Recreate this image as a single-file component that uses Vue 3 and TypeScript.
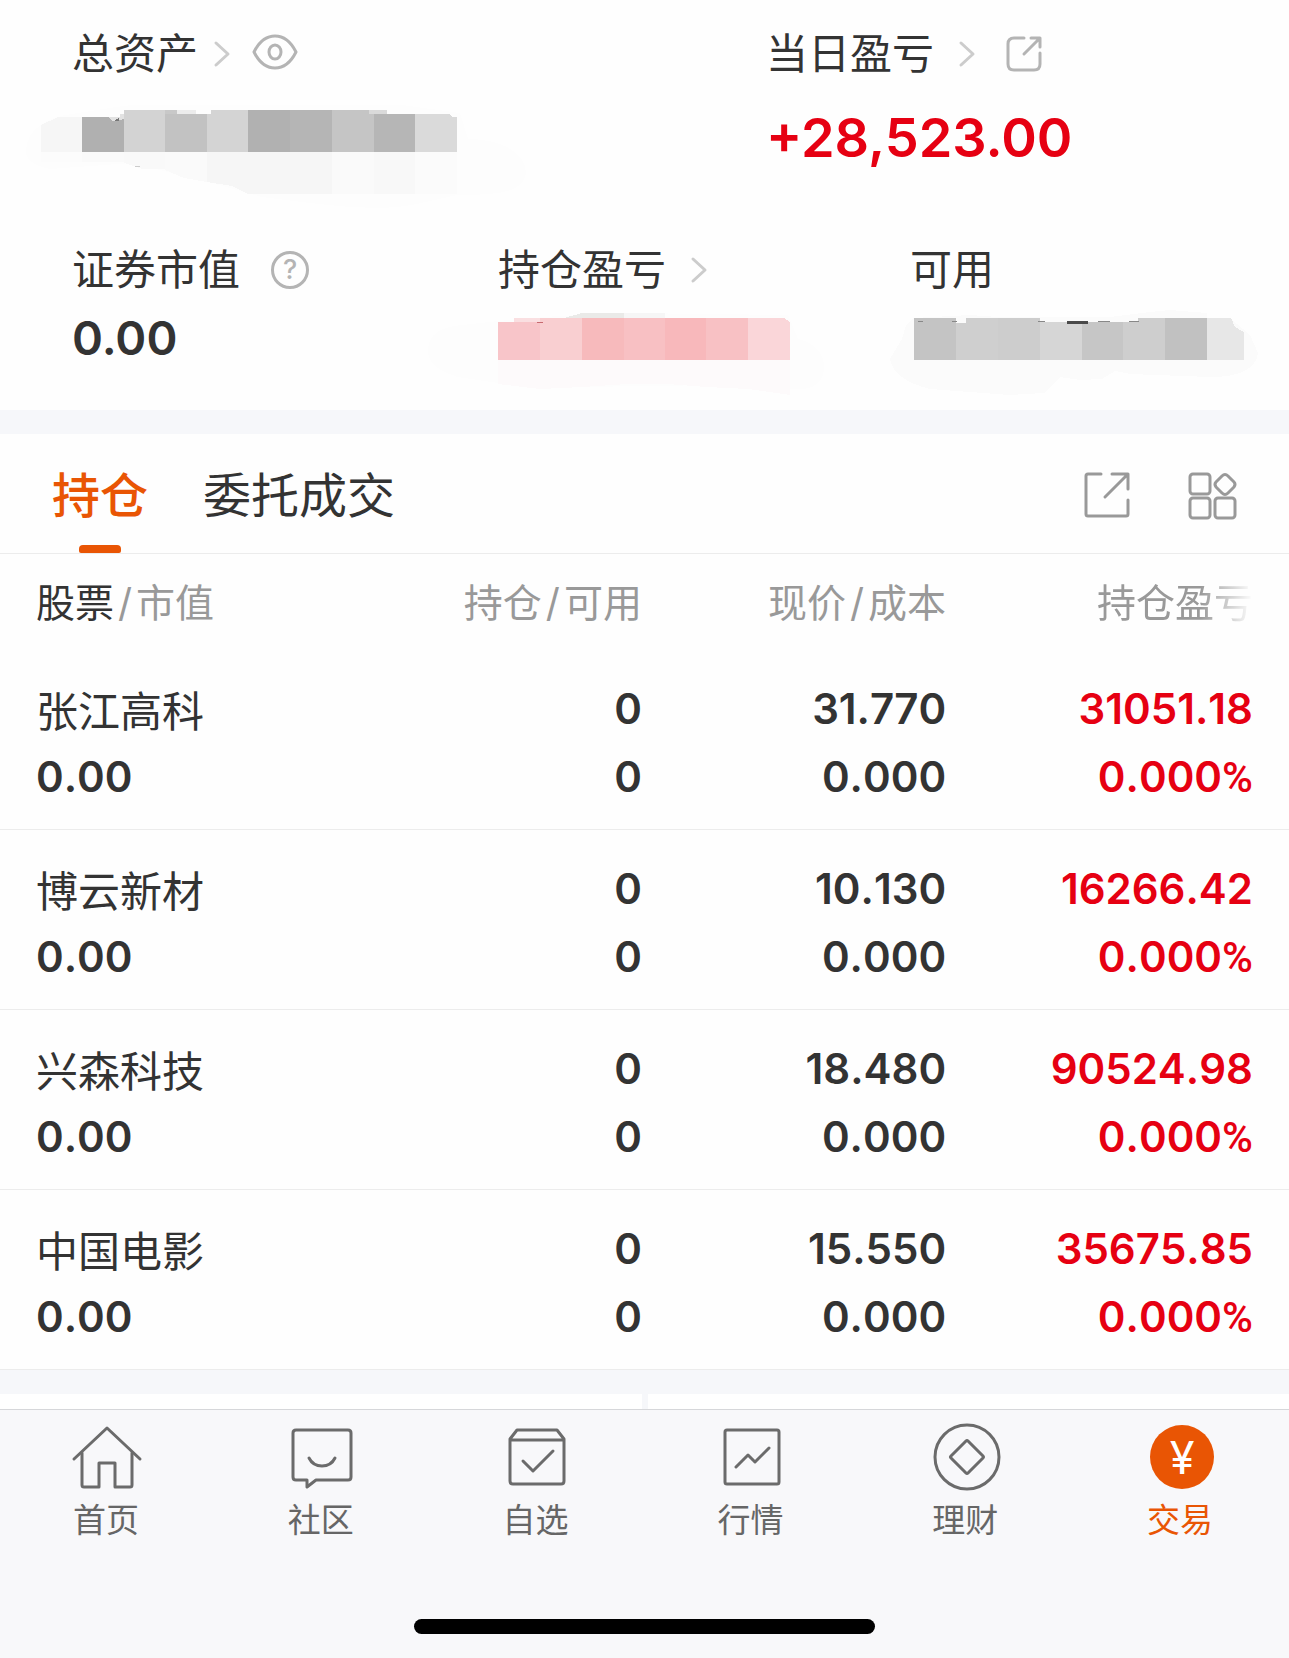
<script setup lang="ts">
interface Holding {
  name: string
  marketValue: string
  position: string
  available: string
  price: string
  cost: string
  profit: string
  profitRate: string
}

interface Cell {
  x: number
  y: number
  w: number
  h: number
  fill: string
}

const holdings: Holding[] = [
  { name: '张江高科', marketValue: '0.00', position: '0', available: '0', price: '31.770', cost: '0.000', profit: '31051.18', profitRate: '0.000' },
  { name: '博云新材', marketValue: '0.00', position: '0', available: '0', price: '10.130', cost: '0.000', profit: '16266.42', profitRate: '0.000' },
  { name: '兴森科技', marketValue: '0.00', position: '0', available: '0', price: '18.480', cost: '0.000', profit: '90524.98', profitRate: '0.000' },
  { name: '中国电影', marketValue: '0.00', position: '0', available: '0', price: '15.550', cost: '0.000', profit: '35675.85', profitRate: '0.000' },
]

const navItems = [
  { key: 'home', label: '首页' },
  { key: 'community', label: '社区' },
  { key: 'watchlist', label: '自选' },
  { key: 'market', label: '行情' },
  { key: 'wealth', label: '理财' },
  { key: 'trade', label: '交易' },
]

const totalCells: Cell[] = [
  { x: 10, y: 12, w: 42, h: 35, fill: '#b0b0b0' },
  { x: 52, y: 5, w: 41, h: 42, fill: '#d3d3d3' },
  { x: 93, y: 9, w: 42, h: 38, fill: '#c2c2c2' },
  { x: 93, y: 5, w: 12, h: 4, fill: '#c8c8c8' },
  { x: 105, y: 5, w: 19, h: 4, fill: '#ececec' },
  { x: 135, y: 9, w: 41, h: 38, fill: '#d4d4d4' },
  { x: 139, y: 5, w: 37, h: 4, fill: '#d4d4d4' },
  { x: 176, y: 5, w: 42, h: 42, fill: '#b1b1b1' },
  { x: 218, y: 5, w: 42, h: 42, fill: '#b5b5b5' },
  { x: 260, y: 5, w: 42, h: 42, fill: '#c5c5c5' },
  { x: 297, y: 5, w: 18, h: 4, fill: '#dadada' },
  { x: 302, y: 9, w: 41, h: 38, fill: '#b6b6b6' },
]

const profitCells: Cell[] = [
  { x: 0, y: 13, w: 42, h: 38, fill: '#f8c5c9' },
  { x: 16, y: 9, w: 26, h: 4, fill: '#fadfe1' },
  { x: 42, y: 9, w: 42, h: 42, fill: '#f9cfd1' },
  { x: 84, y: 9, w: 42, h: 42, fill: '#f7babc' },
  { x: 126, y: 9, w: 41, h: 42, fill: '#f8c0c3' },
  { x: 167, y: 9, w: 41, h: 42, fill: '#f8b8bb' },
  { x: 208, y: 9, w: 42, h: 42, fill: '#f8c1c4' },
]

const availableCells: Cell[] = [
  { x: 4, y: 9, w: 42, h: 42, fill: '#c4c4c4' },
  { x: 46, y: 14, w: 42, h: 37, fill: '#cfcfcf' },
  { x: 56, y: 9, w: 32, h: 5, fill: '#cfcfcf' },
  { x: 88, y: 9, w: 42, h: 42, fill: '#cdcdcd' },
  { x: 130, y: 13, w: 42, h: 38, fill: '#d6d6d6' },
  { x: 172, y: 13, w: 41, h: 38, fill: '#c6c6c6' },
  { x: 213, y: 13, w: 42, h: 38, fill: '#cecece' },
  { x: 228, y: 9, w: 27, h: 4, fill: '#cecece' },
  { x: 255, y: 9, w: 42, h: 42, fill: '#c1c1c1' },
]
</script>

<template>
  <main class="page">
    <section class="summary" aria-label="资产概览">
      <div class="row row-top">
        <div class="metric">
          <div class="label">
            <span>总资产</span>
            <svg class="chevron near" viewBox="0 0 16 26" aria-hidden="true"><path d="M2 2L14 13L2 24" /></svg>
            <button class="icon-btn after-near" type="button" aria-label="隐藏资产">
              <svg class="eye" viewBox="0 2 46 32" aria-hidden="true">
                <path d="M2 16C7 6 14 0 23 0S39 6 44 16C39 26 32 32 23 32S7 26 2 16Z" />
                <ellipse cx="23" cy="16" rx="6" ry="7" />
              </svg>
            </button>
          </div>
          <svg class="mask mask-total" viewBox="0 0 386 64" aria-hidden="true">
            <path d="M-46 46C-46 24 -24 12 0 9L44 2L60 0H330L388 8L396 34C430 34 454 48 454 68C452 88 425 90 385 90L340 100C300 108 240 98 190 92L140 78L60 58L-22 64C-40 60 -46 54 -46 46Z" fill="#fdfdfd" />
            <path d="M-31 20L-14 12H10V47H-31Z" fill="#f6f6f6" />
            <path d="M-31 47H10V57H-31Z" fill="#fcfcfc" />
            <path d="M10 47H52V57H10Z" fill="#fafafa" />
            <path d="M52 47H93V64H70L52 58Z" fill="#f9f9f9" />
            <path d="M93 47H135V77L112 73L93 65Z" fill="#fafafa" />
            <path d="M135 47H260V89H176L160 81L135 77Z" fill="#f6f6f6" />
            <path d="M260 47H302V89H260Z" fill="#fafafa" />
            <path d="M302 47H343V89H302Z" fill="#f8f8f8" />
            <path d="M343 47H385V89H343Z" fill="#fbfbfb" />
            <rect v-for="(c, i) in totalCells" :key="i" :x="c.x" :y="c.y" :width="c.w" :height="c.h" :fill="c.fill" />
            <path d="M36 12H48V9H52V14L44 16H40Z" fill="#e2e2e2" />
            <path d="M42 16L47 13V16Z" fill="#777" />
            <path d="M63 61H68" stroke="#ccc" />
            <path d="M343 9H377L381 12H385V47H343Z" fill="#dadada" />
          </svg>
        </div>
        <div class="metric">
          <div class="label">
            <span>当日盈亏</span>
            <svg class="chevron" viewBox="0 0 16 26" aria-hidden="true"><path d="M2 2L14 13L2 24" /></svg>
            <button class="icon-btn" type="button" aria-label="分享当日盈亏">
              <svg class="share-small" viewBox="0 0 36 36" aria-hidden="true">
                <path d="M18 2H8Q2 2 2 8V28Q2 34 8 34H28Q34 34 34 28V17" />
                <path d="M25 2H34V11M18 18L33 3" />
              </svg>
            </button>
          </div>
          <div class="value value-big rise">+28,523.00</div>
        </div>
      </div>

      <div class="row row-bottom">
        <div class="metric">
          <div class="label">
            <span>证券市值</span>
            <button class="icon-btn help" type="button" aria-label="证券市值说明">?</button>
          </div>
          <div class="value">0.00</div>
        </div>
        <div class="metric">
          <div class="label">
            <span>持仓盈亏</span>
            <svg class="chevron" viewBox="0 0 16 26" aria-hidden="true"><path d="M2 2L14 13L2 24" /></svg>
          </div>
          <svg class="mask mask-profit" viewBox="0 0 292 56" aria-hidden="true">
            <path d="M-70 42C-70 24 -56 18 -36 16L0 12L60 7L130 4L290 6L300 30C318 34 326 46 326 58C326 76 312 82 292 80L220 76L80 78L0 74L-40 68C-60 62 -70 54 -70 42Z" fill="#fdfdfd" />
            <path d="M66 9L84 4H126V9Z" fill="#eaeae8" />
            <path d="M126 4H167V9H126Z" fill="#f6f6f6" />
            <path d="M0 51H292V86L250 80L208 78L170 75H130L84 78L42 80L0 75Z" fill="#fdfafb" />
            <rect v-for="(c, i) in profitCells" :key="i" :x="c.x" :y="c.y" :width="c.w" :height="c.h" :fill="c.fill" />
            <path d="M250 9H286L292 13V51H250Z" fill="#fad6d9" />
            <path d="M39 13H45" stroke="#c86a70" />
          </svg>
        </div>
        <div class="metric">
          <div class="label"><span>可用</span></div>
          <svg class="mask mask-available" viewBox="0 0 334 56" aria-hidden="true">
            <path d="M-20 50L-8 30L-4 16L4 9L60 6L88 8H200L240 3L260 1L297 4V9H320L340 26L348 44C346 60 330 68 300 68L220 65L205 62L192 70L170 71L150 68L134 84L100 86L20 80C-4 74 -18 64 -20 50Z" fill="#fbfbfb" />
            <rect v-for="(c, i) in availableCells" :key="i" :x="c.x" :y="c.y" :width="c.w" :height="c.h" :fill="c.fill" />
            <path d="M297 9H321L325 18L334 23V51H297Z" fill="#e7e7e7" />
            <path d="M157 12H178V15H157Z" fill="#4a4a4a" />
            <path d="M188 12H200M219 12H229M128 12H135M8 12H13M42 12H47" stroke="#888" />
          </svg>
        </div>
      </div>
    </section>

    <section class="holdings" aria-label="持仓列表">
      <div class="tabbar">
        <div class="tabs" role="tablist">
          <button class="tab active" type="button" role="tab" aria-selected="true">持仓</button>
          <button class="tab" type="button" role="tab" aria-selected="false">委托成交</button>
        </div>
        <div class="tools">
          <button class="icon-btn tool" type="button" aria-label="分享持仓">
            <svg viewBox="0 0 50 50" aria-hidden="true">
              <path d="M18 5H5Q3 5 3 7V45Q3 47 5 47H43Q45 47 45 45V31" />
              <path d="M29 5H45V20M22 28L44 6" />
            </svg>
          </button>
          <button class="icon-btn tool" type="button" aria-label="更多功能">
            <svg viewBox="0 0 50 50" aria-hidden="true">
              <rect x="2" y="5" width="20" height="20" rx="3" />
              <rect x="2" y="29" width="20" height="20" rx="3" />
              <rect x="27" y="29" width="20" height="20" rx="3" />
              <path d="M34 7Q37 4 40 7L46 13Q48 15 46 18L40 24Q37 27 34 24L28 18Q26 15 28 13Z" />
            </svg>
          </button>
        </div>
      </div>

      <table class="grid">
        <colgroup>
          <col class="c-name" /><col class="c-num" /><col class="c-num" /><col class="c-last" />
        </colgroup>
        <thead>
          <tr>
            <th scope="col"><b>股票</b><i>/</i>市值</th>
            <th scope="col">持仓<i>/</i>可用</th>
            <th scope="col">现价<i>/</i>成本</th>
            <th scope="col"><span class="fade">持仓盈亏</span></th>
          </tr>
        </thead>
        <tbody>
          <tr v-for="h in holdings" :key="h.name">
            <td><div class="name">{{ h.name }}</div><div>{{ h.marketValue }}</div></td>
            <td><div>{{ h.position }}</div><div>{{ h.available }}</div></td>
            <td><div>{{ h.price }}</div><div>{{ h.cost }}</div></td>
            <td class="rise"><div>{{ h.profit }}</div><div>{{ h.profitRate }}<span class="percent">%</span></div></td>
          </tr>
        </tbody>
      </table>
    </section>

    <div class="split"><div></div><div></div></div>

    <footer class="bottom">
      <nav class="nav" aria-label="主导航">
        <a v-for="item in navItems" :key="item.key" :href="'#' + item.key" class="nav-item" :class="{ current: item.key === 'trade' }">
          <svg viewBox="0 0 66 66" aria-hidden="true">
            <template v-if="item.key === 'home'">
              <path d="M0 35L33 4L66 35" />
              <path d="M8 29V61Q8 63 10 63H25V39H41V63H56Q58 63 58 61V29" />
            </template>
            <template v-else-if="item.key === 'community'">
              <path d="M7 6H59Q62 6 62 9V53Q62 56 59 56H27L18 63V56H7Q4 56 4 53V9Q4 6 7 6Z" />
              <path d="M20 34Q24 42 33 42T46 34" />
            </template>
            <template v-else-if="item.key === 'watchlist'">
              <path d="M6 15L13 6H53L60 15V57Q60 60 57 60H9Q6 60 6 57ZM6 16H60" />
              <path d="M19 37L29 47L49 27" />
            </template>
            <template v-else-if="item.key === 'market'">
              <rect x="6" y="6" width="54" height="54" rx="2" />
              <path d="M17 43L29 31L36 38L50 24" />
            </template>
            <template v-else-if="item.key === 'wealth'">
              <circle cx="33" cy="33" r="32" />
              <path d="M32 17Q33 16 34 17L49 32Q50 33 49 34L34 49Q33 50 32 49L17 34Q16 33 17 32Z" />
            </template>
            <template v-else>
              <circle class="coin" cx="33" cy="33" r="32" />
              <text x="33" y="50" text-anchor="middle">¥</text>
            </template>
          </svg>
          <span>{{ item.label }}</span>
        </a>
      </nav>
      <div class="home-indicator"></div>
    </footer>
  </main>
</template>

<style>
body {
  margin: 0;
  background: #f8f8fa;
}
</style>

<style scoped>
.page {
  background: #fefefe;
  color: #333;
  font-family: Inter, "Noto Sans CJK SC", sans-serif;
  font-size: 42px;
}

button {
  padding: 0;
  border: 0;
  background: none;
  color: inherit;
  font: inherit;
}

svg {
  display: block;
  overflow: visible;
  fill: none;
  stroke-linecap: round;
  stroke-linejoin: round;
}

.rise {
  color: #e60012;
}

.summary {
  padding: 26px 0 44px 72px;
  border-bottom: 24px solid #f6f7fa;
}

.row {
  display: grid;
}

.row-top {
  grid-template-columns: 694fr 523fr;
}

.row-bottom {
  grid-template-columns: 426fr 412fr 379fr;
  margin-top: 72px;
}

.label {
  display: flex;
  align-items: center;
  height: 56px;
  line-height: 56px;
  white-space: nowrap;
}

.chevron {
  width: 16px;
  height: 26px;
  margin-left: 25px;
  stroke: #ccc;
  stroke-width: 3;
}

.chevron.near {
  margin-left: 16px;
}

.icon-btn {
  margin-left: 31px;
  stroke: #b4b4b4;
  stroke-width: 3;
}

.icon-btn.after-near {
  margin-left: 22px;
}

.eye {
  width: 46px;
  height: 32px;
}

.share-small {
  width: 36px;
  height: 36px;
}

.help {
  box-sizing: border-box;
  width: 38px;
  height: 38px;
  border: 3px solid #b4b4b4;
  border-radius: 50%;
  color: #b4b4b4;
  font-size: 27px;
  font-weight: 500;
  line-height: 32px;
}

.value {
  margin-top: 12px;
  font-size: 47px;
  font-weight: 580;
  line-height: 56px;
}

.value-big {
  margin-top: 24px;
  font-size: 54px;
  line-height: 64px;
}

.mask {
  stroke-linecap: butt;
  shape-rendering: crispEdges;
}

.mask-total {
  width: 386px;
  height: 64px;
  margin-top: 23px;
}

.mask-profit {
  width: 292px;
  height: 56px;
  margin-top: 11px;
}

.mask-available {
  width: 334px;
  height: 56px;
  margin-top: 11px;
}

.tabbar {
  display: flex;
  align-items: center;
  justify-content: space-between;
  height: 119px;
  padding: 0 51px 0 52px;
  border-bottom: 1px solid #ececec;
}

.tabs {
  display: flex;
  align-self: stretch;
  gap: 55px;
}

.tab {
  position: relative;
  padding-bottom: 4px;
  font-size: 48px;
}

.tab.active {
  color: #e95504;
  font-weight: 500;
}

.tab.active::after {
  position: absolute;
  bottom: 0;
  left: 50%;
  width: 42px;
  height: 8px;
  margin-left: -21px;
  border-radius: 4px 4px 2px 2px;
  background: #e95504;
  content: "";
}

.tools {
  display: flex;
  gap: 55px;
}

.tool {
  margin-left: 0;
  stroke: #999;
}

.tool svg {
  width: 50px;
  height: 50px;
}

.grid {
  width: 100%;
  border-collapse: separate;
  border-spacing: 0;
  table-layout: fixed;
}

.c-name {
  width: 26.2%;
}

.c-num {
  width: 23.6%;
}

th,
td {
  padding: 0;
  text-align: right;
  white-space: nowrap;
}

th:first-child,
td:first-child {
  padding-left: 36px;
  text-align: left;
}

th:last-child,
td:last-child {
  padding-right: 36px;
}

th {
  height: 92px;
  padding-bottom: 4px;
  color: #999;
  font-size: 39px;
  font-weight: 400;
}

th b {
  color: #333;
  font-weight: 400;
}

th i {
  margin: 0 4px;
  font-style: normal;
}

.fade {
  -webkit-mask-image: linear-gradient(90deg, #000 66%, transparent);
  mask-image: linear-gradient(90deg, #000 66%, transparent);
}

td {
  padding-top: 25px;
  padding-bottom: 18px;
  border-bottom: 1px solid #ececec;
  font-size: 42px;
  font-kerning: none;
  font-weight: 580;
  line-height: 68px;
}

.name {
  padding-top: 5px;
  font-weight: 400;
  line-height: 63px;
}

.percent {
  font-family: Roboto, sans-serif;
  font-weight: 500;
  line-height: 1;
}

.split {
  display: flex;
  gap: 6px;
  height: 15px;
  padding-top: 24px;
  background: #f6f7fa;
}

.split div {
  flex: 1;
  background: #fff;
}

.bottom {
  padding-bottom: 24px;
  border-top: 1px solid #d6d7da;
  background: #f8f8fa;
}

.nav {
  display: grid;
  grid-template-columns: repeat(6, 1fr);
  padding-top: 14px;
}

.nav-item {
  display: flex;
  flex-direction: column;
  align-items: center;
  gap: 10px;
  color: #666;
  font-size: 33px;
  line-height: 40px;
  text-decoration: none;
}

.nav-item span {
  margin-right: 3px;
}

.nav-item svg {
  width: 66px;
  height: 66px;
  stroke: #6b6b6b;
  stroke-width: 3;
}

.nav-item.current {
  color: #e95504;
}

.nav-item .coin {
  fill: #e95504;
  stroke: none;
}

.nav-item text {
  fill: #fff;
  stroke: none;
  font-size: 45px;
  font-weight: 400;
}

.home-indicator {
  width: 35.8%;
  height: 15px;
  margin: 79px auto 0;
  border-radius: 8px;
  background: #000;
}
</style>
